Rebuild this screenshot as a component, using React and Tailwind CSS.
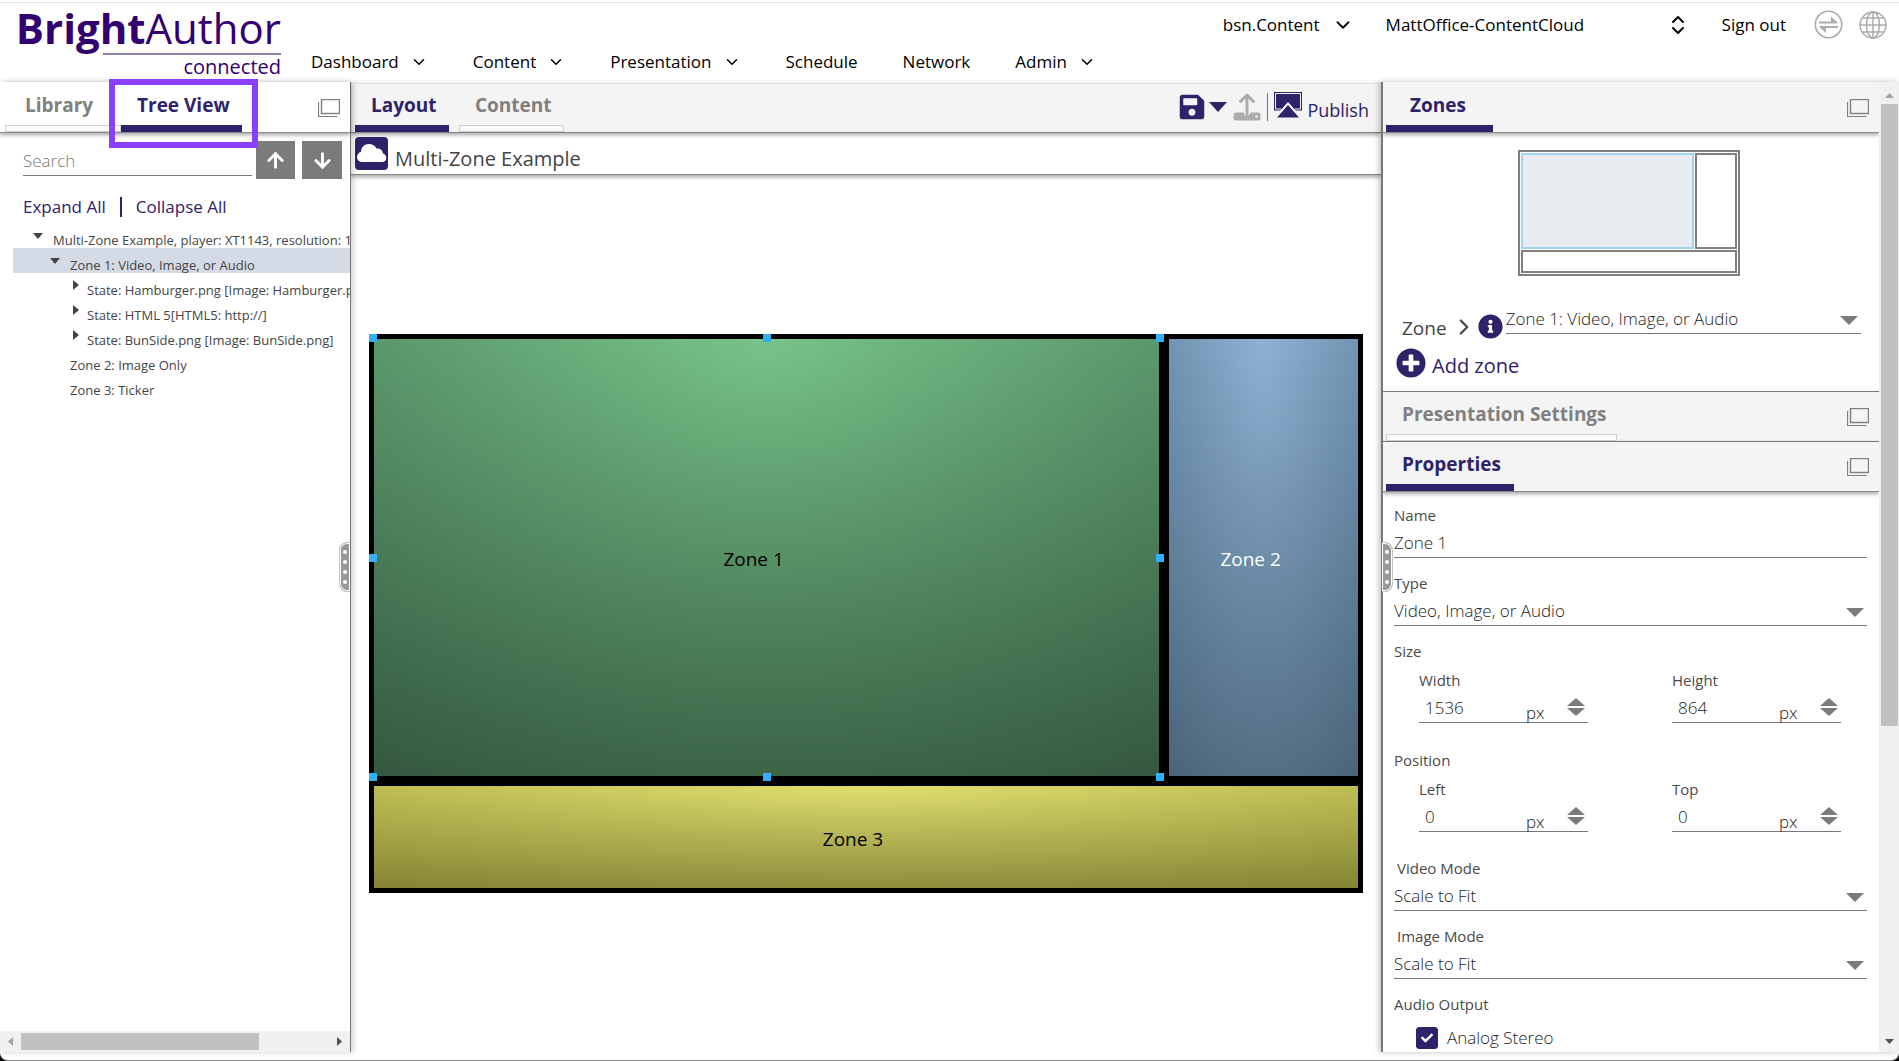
import React, { useState } from 'react';
import { ChevronDown, ChevronsUpDown, ChevronRight, ArrowUp, ArrowDown } from 'lucide-react';
import { FaSave, FaInfoCircle, FaPlusCircle, FaCheck } from 'react-icons/fa';

// --- Data ---
const NAV_ITEMS = [
  { label: 'Dashboard', menu: true },
  { label: 'Content', menu: true },
  { label: 'Presentation', menu: true },
  { label: 'Schedule' },
  { label: 'Network' },
  { label: 'Admin', menu: true },
];

const TREE = [
  { label: 'Multi-Zone Example, player: XT1143, resolution: 1920x1080x60p', indent: 'pl-5', state: 'open' },
  { label: 'Zone 1: Video, Image, or Audio', indent: 'pl-[37px]', state: 'open', selected: true },
  { label: 'State: Hamburger.png [Image: Hamburger.png]', indent: 'pl-[54px]', state: 'closed' },
  { label: 'State: HTML 5[HTML5: http://]', indent: 'pl-[54px]', state: 'closed' },
  { label: 'State: BunSide.png [Image: BunSide.png]', indent: 'pl-[54px]', state: 'closed' },
  { label: 'Zone 2: Image Only', indent: 'pl-[37px]' },
  { label: 'Zone 3: Ticker', indent: 'pl-[37px]' },
];

// --- Small shared pieces ---
function Triangle({ dir = 'down', className }) {
  const points = {
    down: '0,0 20,0 10,10',
    up: '0,10 20,10 10,0',
    right: '0,0 10,10 0,20',
    left: '10,0 0,10 10,20',
  };
  const box = dir === 'down' || dir === 'up' ? '0 0 20 10' : '0 0 10 20';
  return (
    <svg viewBox={box} preserveAspectRatio="none" className={className} aria-hidden="true">
      <polygon points={points[dir]} fill="currentColor" />
    </svg>
  );
}

function PopOutButton() {
  return (
    <button aria-label="Open in window" className="text-[#7f7f7f]">
      <svg width="22" height="18" viewBox="0 0 22 18" fill="none" stroke="currentColor">
        <rect x="3.5" y="0.5" width="18" height="14" strokeWidth="1.4" />
        <path d="M0.5 3V17.5H19.5" strokeWidth="1.2" />
      </svg>
    </button>
  );
}

function Tab({ active, className = '', children }) {
  return (
    <button className={`flex flex-col justify-end h-full text-[19px] leading-6 font-bold ${active ? 'text-[#2e2268]' : 'text-[#808080]'} ${className}`}>
      <span className="w-full pl-4 pb-2 text-left whitespace-nowrap">{children}</span>
      <span className={active ? 'w-full h-[7px] bg-[#2e2268]' : 'w-full h-[7px] bg-[#fafafa] border border-[#cfcfcf]'} />
    </button>
  );
}

function SelectBox({ id, value, className = '' }) {
  return (
    <div className={`relative ${className}`}>
      <select
        id={id}
        defaultValue={value}
        className="appearance-none block w-full h-[30px] border-b border-[#777] bg-transparent text-[17px] font-[350] text-[#222] outline-none"
      >
        <option>{value}</option>
      </select>
      <Triangle className="pointer-events-none absolute right-[3px] top-3 w-[18px] h-[9px] text-[#7b7b7b]" />
    </div>
  );
}

function Field({ id, label, inset, children }) {
  return (
    <div className="flex flex-col gap-[3px]">
      <label htmlFor={id} className={`text-[15px] leading-5 font-medium text-[#4a4a4a] ${inset ? 'pl-[3px]' : ''}`}>{label}</label>
      {children}
    </div>
  );
}

function NumberField({ id, label, value }) {
  return (
    <div className="w-[169px] mr-[84px]">
      <label htmlFor={id} className="block text-[15px] leading-5 font-medium text-[#4a4a4a]">{label}</label>
      <div className="flex mt-[3px] h-[30px] border-b border-[#777] text-[#222] font-[350]">
        <input id={id} defaultValue={value} inputMode="numeric" className="w-[107px] pl-[6px] text-[17px] outline-none" />
        <span className="w-[41px] pt-2 text-[17px] leading-6 h-[29px]">px</span>
        <span className="flex flex-col gap-[2px] pt-[5px] text-[#7b7b7b]">
          <button type="button" aria-label={`Increase ${label}`}><Triangle dir="up" className="block w-[18px] h-2" /></button>
          <button type="button" aria-label={`Decrease ${label}`}><Triangle className="block w-[18px] h-2" /></button>
        </span>
      </div>
    </div>
  );
}

function GripDots({ side }) {
  const place = side === 'left'
    ? 'right-0 rounded-l-lg border-r-0'
    : '-left-px rounded-r-lg border-l-0';
  return (
    <div className={`absolute top-[460px] z-10 flex flex-col items-center justify-center gap-[6px] w-[11px] h-[50px] border border-[#c4c4c4] bg-[#989898] shadow-[inset_0_0_0_1px_white] ${place}`}>
      {[0, 1, 2, 3].map((i) => <span key={i} className="w-1 h-1 rounded-full bg-white" />)}
    </div>
  );
}

// --- Header ---
function Logo() {
  return (
    <a href="#home" aria-label="BrightAuthor connected" className="flex flex-col items-end w-[269px] text-[#33006f]">
      <span className="text-[42px] leading-[50px] whitespace-nowrap"><b>Bright</b>Author</span>
      <span className="w-[178px] h-[2px] bg-[#8f7fb5]" />
      <span className="text-[20px] leading-6">connected</span>
    </a>
  );
}

function Header() {
  return (
    <header className="relative flex h-[82px] shrink-0 border-y border-[#e3e3e3] mt-[2px] pl-3 text-black">
      <Logo />
      <nav className="flex items-end gap-[45px] pl-[30px] pb-[9px] text-[17px] leading-6">
        {NAV_ITEMS.map((item) => (
          <a key={item.label} href={`#${item.label}`} className="flex items-center gap-[11px]">
            {item.label}
            {item.menu && <ChevronDown size={18} strokeWidth={2} />}
          </a>
        ))}
      </nav>
      <div className="flex items-center h-[43px] ml-auto pr-3 text-[17px] leading-6">
        <button className="flex items-center gap-3 mr-8">bsn.Content <ChevronDown size={22} /></button>
        <button className="flex items-center justify-between w-[304px] mr-8">MattOffice-ContentCloud <ChevronsUpDown size={24} /></button>
        <a href="#signout" className="mr-7">Sign out</a>
        <button aria-label="Sync" className="mr-4 text-[#acacac]">
          <svg width="29" height="29" viewBox="0 0 29 29" fill="none" stroke="currentColor" strokeWidth="1.6">
            <circle cx="14.5" cy="14.5" r="13.2" />
            <path d="M5 12.5H23M24 17H6" strokeWidth="2" />
            <path d="M17 6.5L24 13H17ZM12 23L5 16.5H12Z" fill="currentColor" stroke="none" />
          </svg>
        </button>
        <button aria-label="Language" className="text-[#acacac]">
          <svg width="28" height="28" viewBox="0 0 28 28" fill="none" stroke="currentColor" strokeWidth="1.5">
            <circle cx="14" cy="14" r="13" />
            <ellipse cx="14" cy="14" rx="6.5" ry="13" />
            <path d="M14 1V27M1 14H27M3.5 7H24.5M3.5 21H24.5" />
          </svg>
        </button>
      </div>
    </header>
  );
}

// --- Left panel ---
function TreePanel() {
  return (
    <aside className="relative z-10 flex flex-col w-[351px] shrink-0 border-r border-[#777] bg-white shadow-[2px_0_6px_rgba(0,0,0,0.2)]">
      <div className="relative flex h-[51px] shrink-0 pl-[5px] border-b border-[#8a8a8a] shadow-[0_2px_4px_rgba(0,0,0,0.35)]">
        <Tab className="w-[116px] [&>span]:first:pl-5">Library</Tab>
        <Tab active className="w-[121px]">Tree View</Tab>
        <div className="ml-auto mr-[10px] pt-[17px]"><PopOutButton /></div>
        {/* highlight around the active tab */}
        <div className="absolute left-[109px] -top-[3px] w-[149px] h-[69px] border-6 border-[#8a3ffc] z-20" />
      </div>

      <div className="flex items-end pl-[23px] pt-2">
        <input aria-label="Search" placeholder="Search" className="w-[229px] h-[34px] mb-[3px] pt-1 border-b border-[#777] text-[17px] font-light placeholder:text-[#777] outline-none" />
        <button aria-label="Previous" className="flex items-center justify-center ml-1 w-[39px] h-[38px] bg-[#7b7b7b] text-white"><ArrowUp size={23} strokeWidth={3} /></button>
        <button aria-label="Next" className="flex items-center justify-center ml-[7px] w-[40px] h-[38px] bg-[#7b7b7b] text-white"><ArrowDown size={23} strokeWidth={3} /></button>
      </div>

      <div className="flex items-center gap-[14px] pl-[23px] mt-4 text-[17px] leading-6 text-[#2e2268]">
        <button>Expand All</button>
        <span className="w-[2px] h-5 bg-[#2e2268]" />
        <button>Collapse All</button>
      </div>

      <ul className="mt-1 pl-[13px] overflow-hidden text-[13px] leading-[25px] text-[#444]">
        {TREE.map((node) => (
          <li key={node.label} className={`flex h-[25px] whitespace-nowrap ${node.indent} ${node.selected ? 'bg-[#d5dbe6]' : ''}`}>
            <span className="w-5 shrink-0">
              {node.state === 'open' && <Triangle className="w-[10px] h-[6px] mt-[10px]" />}
              {node.state === 'closed' && <Triangle dir="right" className="w-[6px] h-[10px] mt-[7px] ml-[6px]" />}
            </span>
            <a href="#node" className="pt-[5px]">{node.label}</a>
          </li>
        ))}
      </ul>

      <div className="flex items-center mt-auto h-[21px] px-2 bg-[#f0f0f0]">
        <Triangle dir="left" className="w-[5px] h-[9px] text-[#a3a3a3]" />
        <div className="ml-2 w-[238px] h-[17px] bg-[#c1c1c1]" />
        <Triangle dir="right" className="ml-auto w-[5px] h-[9px] text-[#505050]" />
      </div>
      <GripDots side="left" />
    </aside>
  );
}

// --- Center ---
function Toolbar() {
  return (
    <div className="flex items-center ml-auto pr-3 text-[#2e2268]">
      <button aria-label="Save"><FaSave size={28} /></button>
      <button aria-label="Save options" className="ml-[3px]"><Triangle className="w-[18px] h-[10px]" /></button>
      <button aria-label="Upload" className="ml-[6px] text-[#acacac]">
        <svg width="28" height="28" viewBox="0 0 28 28" fill="none" stroke="currentColor">
          <path d="M14 21V3M7.5 8.5L14 2L20.5 8.5" strokeWidth="3" strokeLinejoin="round" strokeLinecap="round" />
          <path d="M3 19.5H11V21Q14 24 17 21V19.5H25Q27.5 19.5 27.5 22V25Q27.5 27.5 25 27.5H3Q0.5 27.5 0.5 25V22Q0.5 19.5 3 19.5Z" fill="currentColor" stroke="none" />
          <circle cx="23.5" cy="23.5" r="1.2" fill="#f4f4f4" stroke="none" />
        </svg>
      </button>
      <span className="ml-[6px] w-px h-7 bg-[#777]" />
      <button className="flex items-start gap-[5px] ml-[6px] text-[18px] leading-6">
        <svg width="28" height="26" viewBox="0 0 28 26" aria-hidden="true">
          <path d="M0 0H28V18.5H21.5L14 10.5L6.5 18.5H0Z" fill="currentColor" />
          <path d="M7 17H1.5V1.5H26.5V17H21" fill="none" stroke="#f4f4f4" strokeWidth="1" />
          <path d="M14 10L28 26H0Z" fill="#f4f4f4" />
          <path d="M14 13L25 25.5H3Z" fill="currentColor" />
        </svg>
        <span className="pt-[6px]">Publish</span>
      </button>
    </div>
  );
}

function Handle({ className }) {
  return <span className={`absolute w-2 h-2 bg-[#2fb0fb] ${className}`} />;
}

function Zone({ name, className, children }) {
  return (
    <div className={`relative flex items-center justify-center border-[5px] border-black pr-[26px] pt-1 text-[19px] ${className}`}>
      {name}
      {children}
    </div>
  );
}

function LayoutEditor() {
  return (
    <main className="flex flex-col flex-1 min-w-0">
      <div className="flex h-[51px] shrink-0 gap-[10px] pl-1 bg-[#f4f4f4] border-b border-[#8a8a8a] shadow-[0_2px_4px_rgba(0,0,0,0.35)]">
        <Tab active className="w-[94px]">Layout</Tab>
        <Tab className="w-[105px]">Content</Tab>
        <Toolbar />
      </div>
      <div className="flex h-[42px] shrink-0 pl-1 border-b border-[#8a8a8a] shadow-[0_2px_4px_rgba(0,0,0,0.35)]">
        <svg width="33" height="33" viewBox="0 0 33 33" className="mt-1" aria-hidden="true">
          <rect width="33" height="33" rx="4" fill="#2e2268" />
          <path d="M7.5 25C3.5 25 2 22.5 2 20C2 17.3 3.8 15.5 6 15C6 10 9.5 7 14 7C17.5 7 20 8.5 21.5 11.5C25 11 27.5 13 28 16.5C30.3 17.3 31.3 19 31.3 21C31.3 23.5 29.5 25 27 25Z" fill="#fff" />
        </svg>
        <h1 className="pl-[7px] pt-[14px] text-[20px] leading-6 text-[#444]">Multi-Zone Example</h1>
      </div>

      <div className="flex flex-1 items-center px-[18px]">
        <div className="grid grid-cols-[4fr_1fr] grid-rows-[4fr_1fr] w-full aspect-video">
          <Zone name="Zone 1" className="text-black bg-[linear-gradient(transparent,rgba(0,0,0,0.34)),radial-gradient(ellipse_at_50%_0%,#78c48a,#4f8560)]">
            <Handle className="-left-[5px] -top-[5px]" />
            <Handle className="left-1/2 -ml-1 -top-[5px]" />
            <Handle className="-right-[5px] -top-[5px]" />
            <Handle className="-left-[5px] top-1/2 -mt-1" />
            <Handle className="-right-[5px] top-1/2 -mt-1" />
            <Handle className="-left-[5px] -bottom-[5px]" />
            <Handle className="left-1/2 -ml-1 -bottom-[5px]" />
            <Handle className="-right-[5px] -bottom-[5px]" />
          </Zone>
          <Zone name="Zone 2" className="text-white bg-[linear-gradient(transparent,rgba(0,0,0,0.26)),radial-gradient(ellipse_at_50%_0%,#8fb2d4,#6488a4)]" />
          <Zone name="Zone 3" className="col-span-2 text-black bg-[linear-gradient(transparent,rgba(0,0,0,0.25)),radial-gradient(ellipse_at_50%_0%,#dfdf70,#b0b046)]" />
        </div>
      </div>
    </main>
  );
}

// --- Right panel ---
function ZonesSection() {
  return (
    <section>
      <div className="flex h-[51px] pl-[3px] bg-[#f4f4f4] border-b border-[#8a8a8a] shadow-[0_2px_4px_rgba(0,0,0,0.35)]">
        <Tab active className="w-[107px] [&>span]:first:pl-6">Zones</Tab>
        <div className="ml-auto mr-[10px] pt-[17px]"><PopOutButton /></div>
      </div>
      <div className="flex justify-center pt-[17px] pr-1">
        <div className="grid grid-cols-[173px_1fr] grid-rows-[96px_1fr] gap-px w-[222px] h-[126px] p-px border-2 border-[#7f7f7f]">
          <div className="bg-[#e8ecf1] border-2 border-[#9fd4f5]" />
          <div className="border-2 border-[#7f7f7f]" />
          <div className="col-span-2 border-2 border-[#7f7f7f]" />
        </div>
      </div>
      <div className="flex h-9 mt-7 pl-[19px] pr-[18px] items-end text-[#444]">
        <label htmlFor="zone" className="text-[19px] leading-6">Zone</label>
        <ChevronRight size={26} strokeWidth={2} className="ml-1 mr-px" />
        <FaInfoCircle size={25} className="mb-px text-[#2e2268]" />
        <SelectBox id="zone" value="Zone 1: Video, Image, or Audio" className="flex-1 self-start ml-[3px]" />
      </div>
      <button className="flex items-start gap-[6px] mt-2 pl-[13px] mb-[13px] text-[20px] leading-6 text-[#2e2268]">
        <FaPlusCircle size={30} /> <span className="pt-[6px]">Add zone</span>
      </button>
    </section>
  );
}

function PropertiesForm() {
  const [analog, setAnalog] = useState(true);

  return (
    <form className="flex flex-col gap-[15px] pt-[13px] pl-[11px] pr-3">
      <Field id="name" label="Name">
        <input id="name" defaultValue="Zone 1" className="h-[30px] border-b border-[#777] text-[17px] font-[350] text-[#222] outline-none" />
      </Field>
      <Field id="type" label="Type"><SelectBox id="type" value="Video, Image, or Audio" /></Field>
      <fieldset className="pb-3">
        <legend className="text-[15px] leading-5 font-medium text-[#4a4a4a]">Size</legend>
        <div className="flex pl-[25px] pt-[9px]">
          <NumberField id="width" label="Width" value="1536" />
          <NumberField id="height" label="Height" value="864" />
        </div>
      </fieldset>
      <fieldset className="pb-[11px]">
        <legend className="text-[15px] leading-5 font-medium text-[#4a4a4a]">Position</legend>
        <div className="flex pl-[25px] pt-[9px]">
          <NumberField id="left" label="Left" value="0" />
          <NumberField id="top" label="Top" value="0" />
        </div>
      </fieldset>
      <Field id="videoMode" label="Video Mode" inset><SelectBox id="videoMode" value="Scale to Fit" /></Field>
      <Field id="imageMode" label="Image Mode" inset><SelectBox id="imageMode" value="Scale to Fit" /></Field>
      <fieldset>
        <legend className="text-[15px] leading-5 font-medium text-[#4a4a4a]">Audio Output</legend>
        <label className="relative flex items-center gap-[9px] pl-[22px] pt-3 text-[17px] leading-6 font-[350] text-[#222]">
          <input type="checkbox" checked={analog} onChange={() => setAnalog(!analog)} className="appearance-none w-[22px] h-[22px] rounded-[3px] border border-[#2e2268] checked:bg-[#2e2268]" />
          {analog && <FaCheck size={12} className="pointer-events-none absolute left-[27px] top-[18px] text-white" />}
          Analog Stereo
        </label>
      </fieldset>
    </form>
  );
}

function SidePanel() {
  return (
    <aside className="relative z-10 flex w-[518px] shrink-0 border-l-2 border-[#777] bg-white shadow-[-2px_0_6px_rgba(0,0,0,0.25)]">
      <div className="flex-1 min-w-0 overflow-hidden">
        <ZonesSection />
        <div className="flex h-[50px] pl-[3px] bg-[#f4f4f4] border-t border-[#777]">
          <Tab className="w-[231px]">Presentation Settings</Tab>
          <div className="ml-auto mr-[10px] pt-4"><PopOutButton /></div>
        </div>
        <div className="flex h-[51px] pl-[3px] bg-[#f4f4f4] border-y border-t-[#777] border-b-[#8a8a8a] shadow-[0_2px_4px_rgba(0,0,0,0.35)]">
          <Tab active className="w-[128px]">Properties</Tab>
          <div className="ml-auto mr-[10px] pt-4"><PopOutButton /></div>
        </div>
        <PropertiesForm />
      </div>
      <div className="flex flex-col items-center w-5 bg-[#f0f0f0] pt-[11px] pb-2">
        <Triangle dir="up" className="w-[9px] h-[5px] text-[#a3a3a3]" />
        <div className="mt-[6px] w-[17px] h-[622px] bg-[#c1c1c1]" />
        <Triangle className="mt-auto w-[9px] h-[5px] text-[#505050]" />
      </div>
      <GripDots side="right" />
    </aside>
  );
}

// --- Page ---
function App() {
  return (
    <div className="bg-black">
      <div className="flex flex-col h-screen overflow-hidden bg-white border-b border-[#8c8c8c] rounded-b-lg font-['Open_Sans','Noto_Sans',sans-serif]">
        <Header />
        <div className="flex flex-1 min-h-0 mb-2 -mt-[2px]">
          <TreePanel />
          <LayoutEditor />
          <SidePanel />
        </div>
      </div>
    </div>
  );
}

export default App;
